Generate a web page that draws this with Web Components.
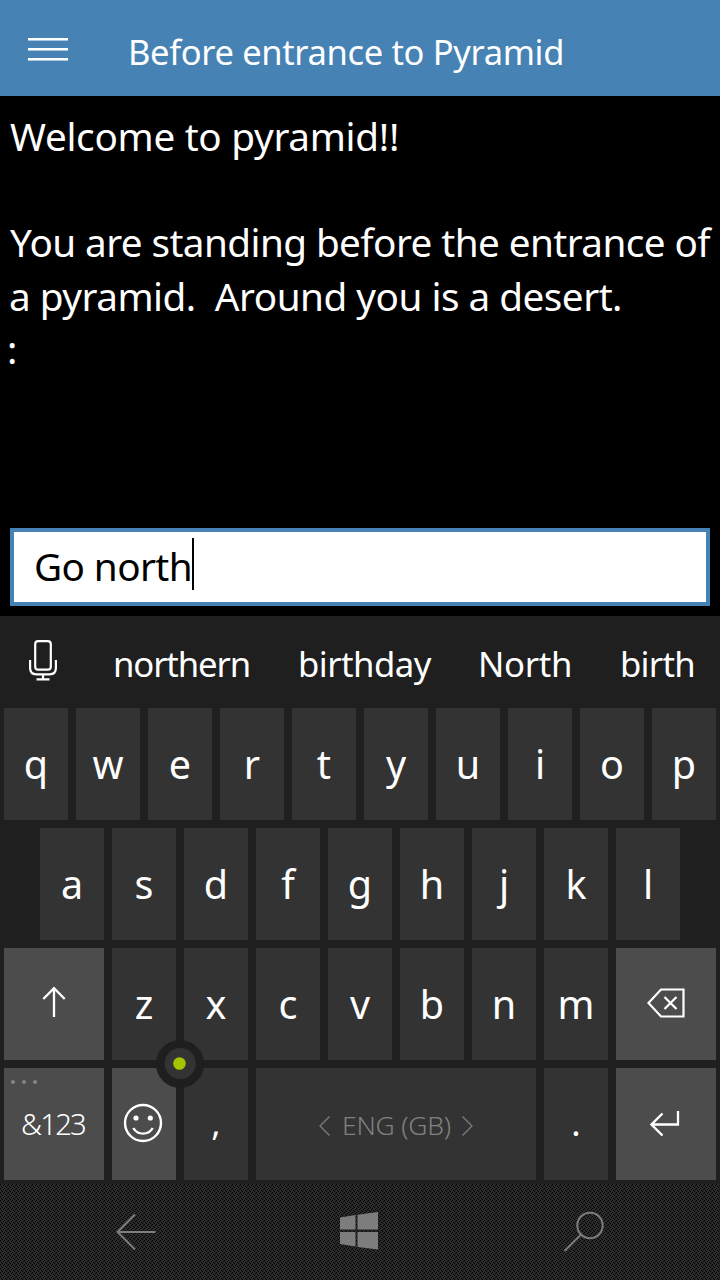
<!DOCTYPE html>
<html lang="en">
<head>
<meta charset="utf-8">
<title>Pyramid</title>
<style>
html,body{margin:0;background:#000}
body{font-family:"Noto Sans","Open Sans",sans-serif;color:#fff}
</style>
</head>
<body>
<adventure-app></adventure-app>
<script>
function define(name, markup, setup) {
  const template = document.createElement('template');
  template.innerHTML = markup.trim();
  customElements.define(name, class extends HTMLElement {
    connectedCallback() {
      if (this.shadowRoot) return;
      this.attachShadow({mode: 'open'}).append(template.content.cloneNode(true));
      if (setup) setup(this, this.shadowRoot);
    }
  });
}

// One line of text whose tracking is adjusted to fill the given width.
define('fit-text', `
<style>:host{display:block;flex:none}span{display:block;width:max-content;white-space:pre}</style><span><slot></slot></span>`,
(host, root) => {
  const want = +host.getAttribute('width');
  if (!want) return;
  const span = root.querySelector('span');
  const n = host.textContent.length;
  span.style.letterSpacing = ((want - span.getBoundingClientRect().width) / n) + 'px';
  host.style.width = want + 'px';
});

define('app-header', `
<style>
:host{display:flex;align-items:center;height:96px;background:#4682b4;font-size:34.5px;line-height:92px}
svg{margin-left:28px;width:40px;height:24px;margin-top:4px;flex:none}
.title{margin-left:60px;padding-top:7px}
</style>
<svg viewBox="0 0 40 24" shape-rendering="crispEdges"><path fill="#fff" d="M0 0h40v2H0zM0 10h40v2H0zM0 20h40v2H0z"/><path fill="#a9c6de" d="M0 2h40v1H0zM0 12h40v1H0M0 22h40v1H0z"/></svg>
<div class="title"><slot></slot></div>`);

define('story-text', `
<style>:host{display:block;height:420px;padding:13.5px 0 0 10px;box-sizing:border-box;font-size:38.7px;line-height:53.4px}
::slotted(.blank){height:53.4px}</style><slot></slot>`);

define('command-box', `
<style>
:host{display:flex;align-items:center;box-sizing:border-box;height:78px;margin:12px 10px 10px;border:4px solid #4682b4;background:#fff;color:#000;font-size:38.7px;line-height:70px;padding-left:20px}
.t{margin-top:-3px}
i{width:2px;height:52px;background:#000;margin-top:-6px}
</style><div class="t"><slot></slot></div><i></i>`);

define('suggestion-bar', `
<style>
:host{display:flex;height:92px;align-items:center;font-size:34.7px;line-height:90px}
svg{width:28px;height:42px;margin:-4px 56px 0 29px;flex:none}
.words{display:flex;gap:47px;padding-top:4px}
</style>
<svg viewBox="0 0 28 42" fill="none" stroke="#fff" stroke-width="2.2"><rect x="6.2" y="2.2" width="15.6" height="28.5" rx="3"/><path d="M1.1 21v8q0 6.300 6.300 6.300h13.200q6.300 0 6.300-6.300v-8M14 35.300v5M7.500 40.400h13"/></svg>
<div class="words"><slot></slot></div>`);

define('key-row', `<style>:host{display:flex;gap:8px;justify-content:center;height:112px}</style><slot></slot>`);

define('key-cap', `
<style>
:host{display:flex;position:relative;width:64px;height:112px;background:#333;align-items:center;justify-content:center;font-size:39.5px;line-height:112px;flex:none}
:host([wide]){width:100px}
:host([space]){width:280px;color:#808080;font-size:26.5px;font-weight:300}
:host([fn]){background:#4c4c4c}
:host([small]){font-size:29.3px;font-weight:300}
:host([mark]){font-size:35px}
:host([mark]) .label{margin-top:-2px}
:host([space]) .label{padding-top:3px;margin-left:0}
:host([small]) .label{margin-left:-2px;margin-top:-1px}
.label{display:flex;align-items:center}
</style><div class="label"><slot></slot></div><slot name="over"></slot>`);

const ICONS = {
  shift: [24, 32, '<path d="M12 2v29M1.300 13L12 2.200 22.700 13" stroke-width="2.300"/>'],
  back: [38, 30, '<path d="M14 1.500h22.500v27H14L1.500 15zM17.500 9l12 12M29.500 9l-12 12" stroke-width="2.200"/>'],
  enter: [30, 26, '<path d="M28 1v13.500H1.500M12.500 3.500l-11 11 11 11" stroke-width="2.300"/>'],
  smile: [40, 40, '<circle cx="20" cy="20" r="18" stroke-width="2.400"/><circle cx="13" cy="15" r="2.600" fill="currentColor" stroke="none"/><circle cx="27.300" cy="15" r="2.600" fill="currentColor" stroke="none"/><path d="M10.300 25q3.200 5.600 9.700 5.600t9.700-5.600" stroke-width="2.400"/>'],
  left: [11, 20, '<path d="M10.500 .5L1 10l9.500 9.500" stroke-width="1.200"/>'],
  right: [11, 20, '<path d="M.5 .5L10 10 .5 19.500" stroke-width="1.200"/>'],
  arrow: [40, 38, '<path d="M39.500 19H2M19 1.500L1.500 19 19 36.500" stroke-width="2"/>'],
  windows: [38, 38, '<path fill="currentColor" stroke="none" d="M0 5.500L15.500 3v14.500H0zM17.500 2.700L38 0v17.500H17.500zM0 20h15.500v14.500L0 32zM17.500 20H38v17.500L17.500 35z"/>'],
  search: [42, 42, '<circle cx="27" cy="14.500" r="12.700" stroke-width="2"/><path d="M18 23.500L1.500 40" stroke-width="2"/>']
};
customElements.define('line-icon', class extends HTMLElement {
  connectedCallback() {
    if (this.shadowRoot) return;
    const [w, h, body] = ICONS[this.getAttribute('name')];
    this.attachShadow({mode: 'open'}).innerHTML =
      `<style>:host{display:block;line-height:0;width:${w}px;height:${h}px;flex:none}</style><svg width="${w}" height="${h}" viewBox="0 0 ${w} ${h}" fill="none" stroke="currentColor">${body}</svg>`;
  }
});

define('more-dots', `
<style>:host{position:absolute;left:7px;top:12px;display:flex;gap:7px}i{width:4px;height:4px;border-radius:2px;background:#858585}</style><i></i><i></i><i></i>`);

// Pointing stick that sits over the junction of four keys.
define('cursor-stick', `
<style>:host{position:absolute;left:44px;top:-28px;z-index:2;line-height:0}</style>
<svg width="48" height="48"><circle cx="24" cy="24" r="24" fill="#1f1f1f"/><circle cx="24.200" cy="23.500" r="15.500" fill="#333"/><circle cx="23.500" cy="23.500" r="6.300" fill="#a4c400"/></svg>`);

define('touch-keyboard', `
<style>
:host{display:block;background:#1f1f1f;height:568px}
.rows{display:flex;flex-direction:column;gap:8px}
.over{position:relative;z-index:1}
</style>
<suggestion-bar>
<fit-text width="137">northern</fit-text><fit-text width="133" style="margin-left:1px">birthday</fit-text><fit-text width="94">North</fit-text><fit-text width="75" style="margin-left:1px">birth</fit-text>
</suggestion-bar>
<div class="rows"><key-row class="r1"></key-row><key-row class="r2"></key-row><key-row class="r3"></key-row>
<key-row class="over">
<key-cap wide fn small><fit-text width="64">&amp;123</fit-text><more-dots slot="over"></more-dots></key-cap>
<key-cap fn><line-icon name="smile" style="margin-top:-2px;margin-left:-2px"></line-icon><cursor-stick slot="over"></cursor-stick></key-cap>
<key-cap mark>,</key-cap>
<key-cap space><line-icon name="left"></line-icon><fit-text width="109" style="margin:-2px 11px 0 12px">ENG (GB)</fit-text><line-icon name="right"></line-icon></key-cap>
<key-cap mark>.</key-cap>
<key-cap wide fn><line-icon name="enter" style="margin-top:-2px;margin-left:-3px"></line-icon></key-cap>
</key-row></div>`,
(host, root) => {
  const caps = s => [...s].map(c => `<key-cap>${c}</key-cap>`).join('');
  root.querySelector('.r1').innerHTML = caps('qwertyuiop');
  root.querySelector('.r2').innerHTML = caps('asdfghjkl');
  root.querySelector('.r3').innerHTML =
    '<key-cap wide fn><line-icon name="shift" style="margin-top:-4px"></line-icon></key-cap>' + caps('zxcvbnm') +
    '<key-cap wide fn><line-icon name="back" style="margin-top:-2px;margin-left:-1px"></line-icon></key-cap>';
});

define('nav-bar', `
<style>
:host{display:grid;grid-template-columns:271px 176px 273px;align-items:center;justify-items:center;height:96px;color:#7d7d7d;position:relative}
.mesh{position:absolute;inset:0;z-index:-1}
</style>
<svg class="mesh" width="720" height="96" shape-rendering="crispEdges"><defs><pattern id="m" width="4" height="4" patternUnits="userSpaceOnUse"><rect width="4" height="4" fill="#2b2b2b"/><path fill="#000" d="M0 0h1v1H0zM3 1h1v1H3zM1 2h1v1H1zM2 3h1v1H2z"/></pattern></defs><rect width="720" height="96" fill="url(#m)"/></svg>
<line-icon name="arrow"></line-icon><line-icon name="windows" style="margin-top:-2px"></line-icon><line-icon name="search"></line-icon>`);

define('adventure-app', `
<style>:host{display:block;width:720px;height:1280px;overflow:hidden;background:#000;position:relative;z-index:0}</style>
<app-header><fit-text width="436">Before entrance to Pyramid</fit-text></app-header>
<story-text><fit-text width="389">Welcome to pyramid!!</fit-text><div class="blank"></div><fit-text width="700">You are standing before the entrance of</fit-text><fit-text width="613" style="margin-left:-1px">a pyramid.  Around you is a desert.</fit-text><fit-text style="margin-left:-3px">:</fit-text></story-text>
<command-box><fit-text width="158">Go north</fit-text></command-box>
<touch-keyboard></touch-keyboard>
<nav-bar></nav-bar>`);
</script>
</body>
</html>
